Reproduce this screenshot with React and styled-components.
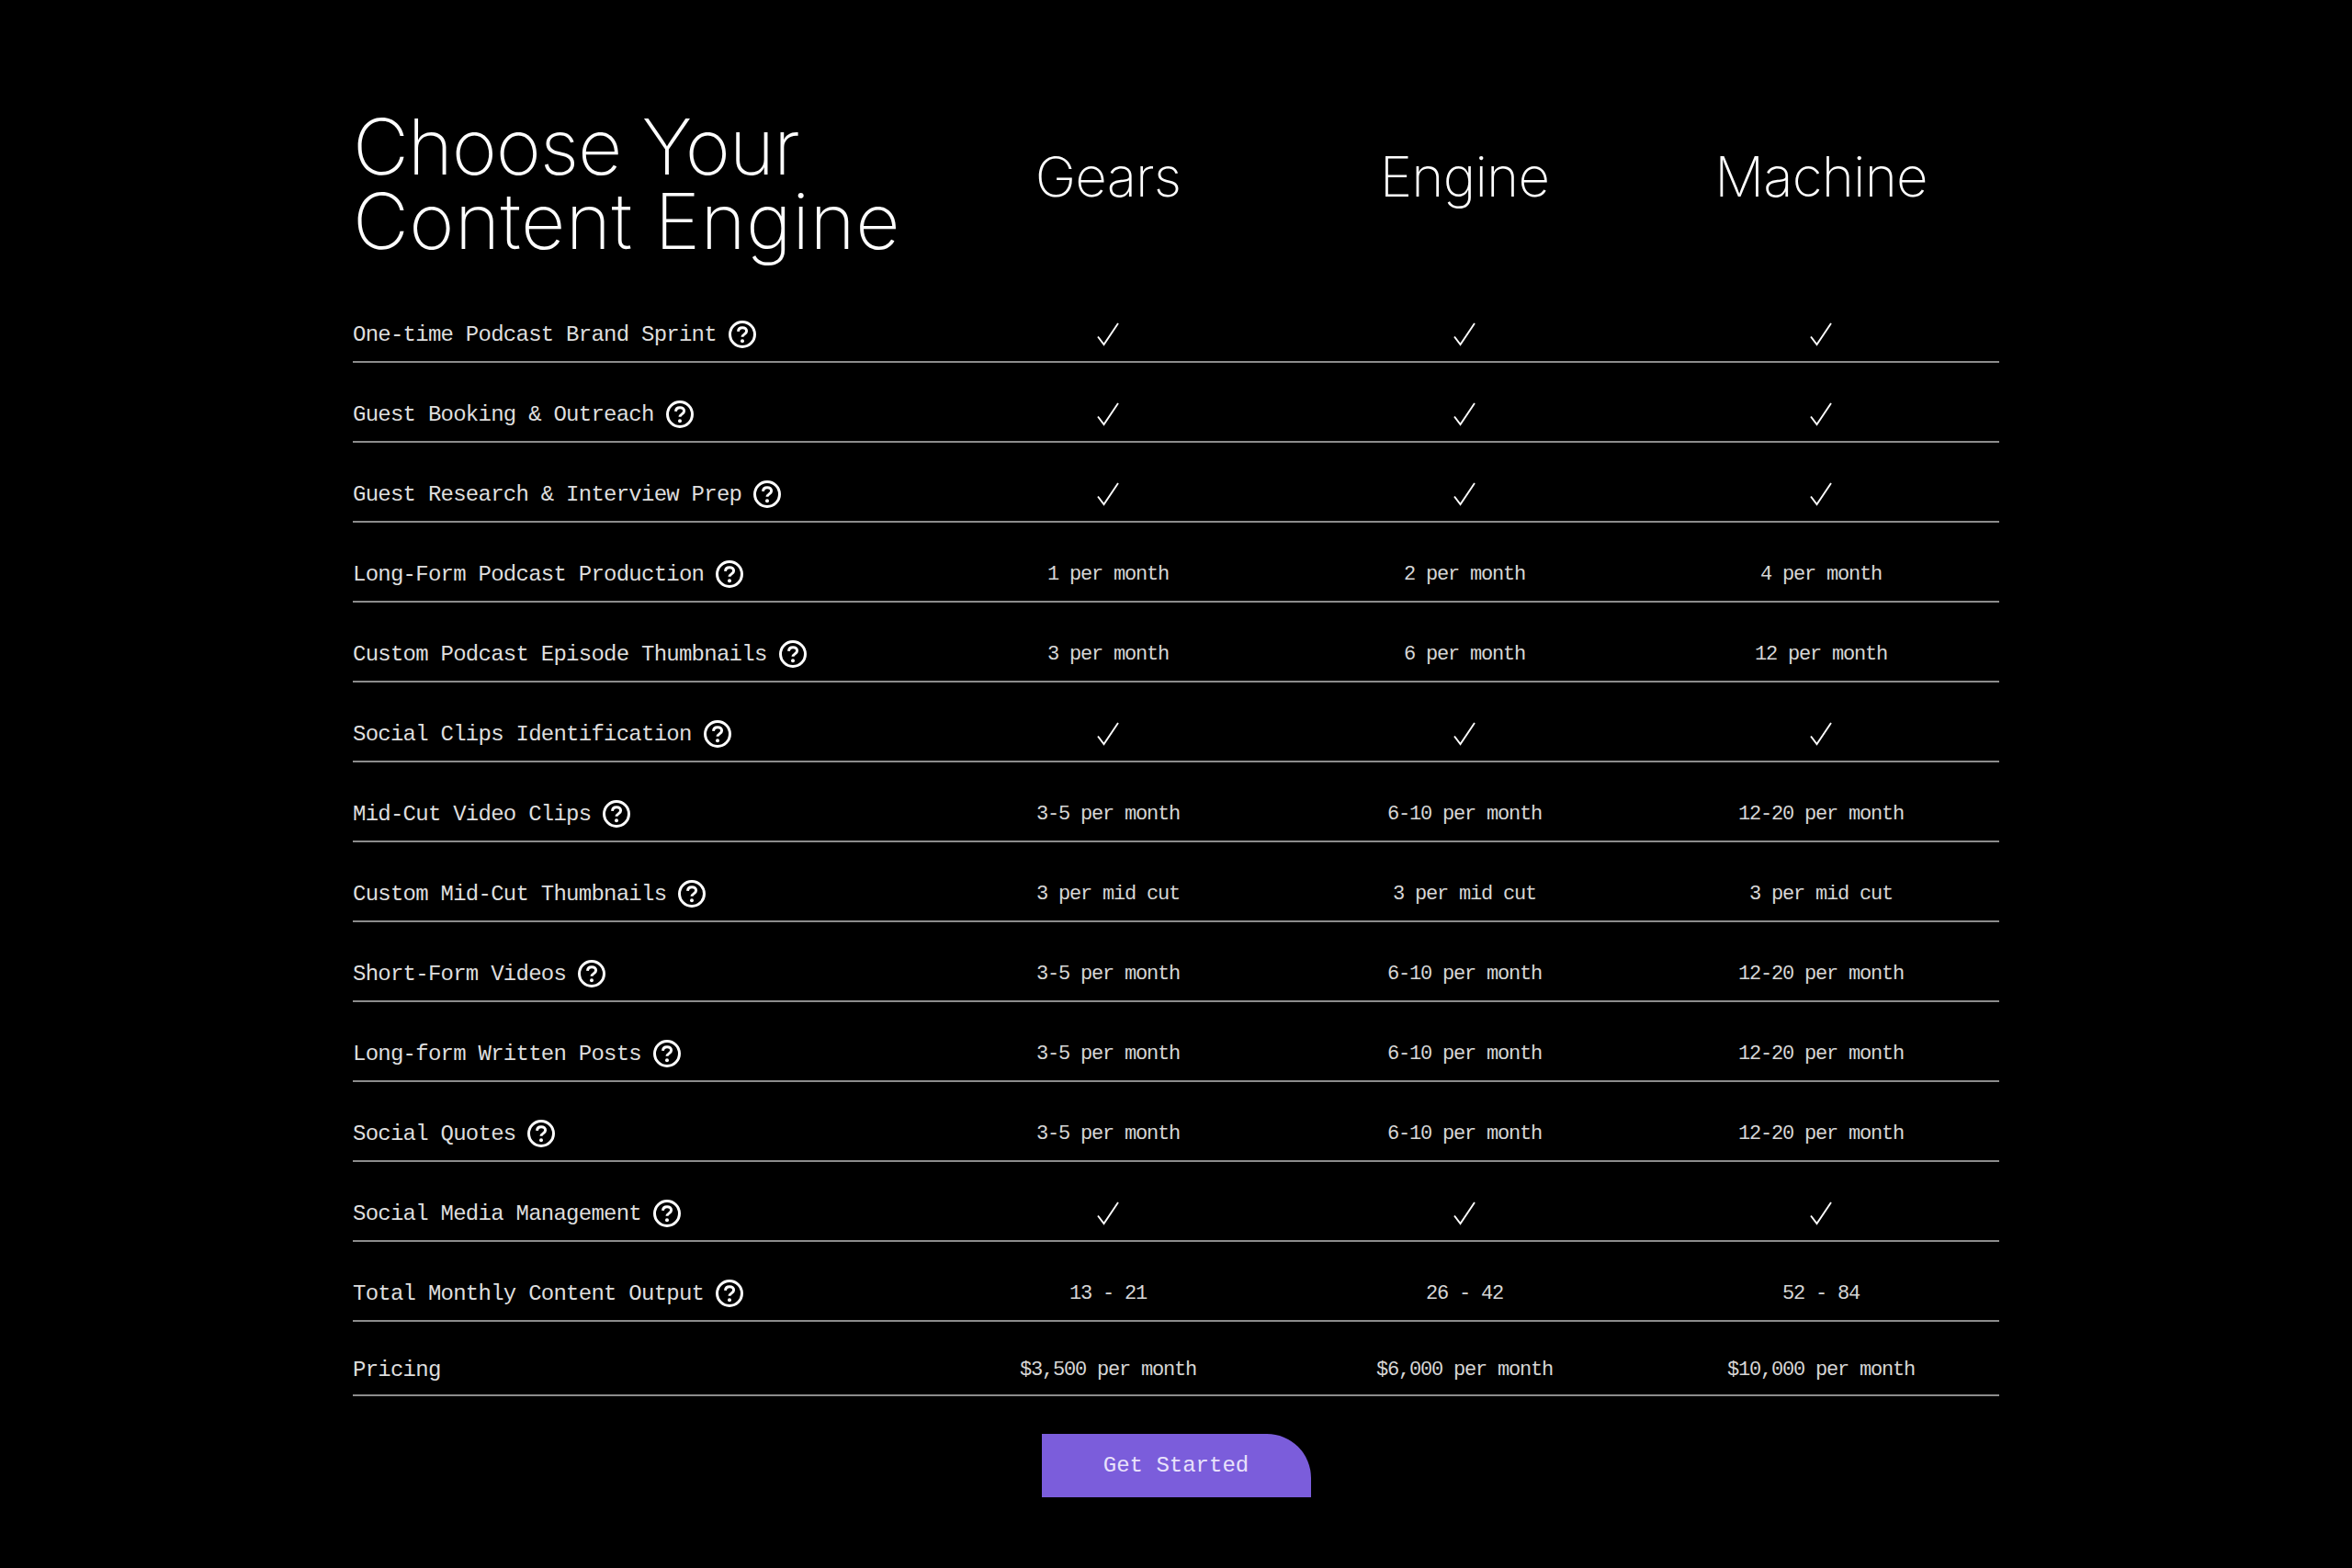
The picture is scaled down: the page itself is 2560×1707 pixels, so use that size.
import React from 'react';
import styled, { createGlobalStyle } from 'styled-components';

const GlobalStyle = createGlobalStyle`
  html, body {
    margin: 0;
    background: #000;
  }
`;

const Page = styled.div`
  min-height: 1707px;
  box-sizing: border-box;
  padding: 119px 384px 0;
  background: #000;
  display: flex;
  flex-direction: column;
`;

const Header = styled.div`
  display: grid;
  grid-template-columns: 628px repeat(3, 388px);
  align-items: start;
  height: 189px;
`;

const Title = styled.h1`
  margin: 0;
  color: #fff;
  font-family: 'Inter', sans-serif;
  font-size: 84px;
  font-weight: 200;
  line-height: 81px;
`;

const TitleLine = styled.span`
  display: block;
  letter-spacing: ${({ $tracking }) => $tracking};
  white-space: nowrap;
`;

const PlanName = styled.h2`
  margin: 37px 0 0;
  color: #fff;
  text-align: center;
  font-family: 'Inter', sans-serif;
  font-size: 60px;
  font-weight: 200;
  line-height: 72px;
  letter-spacing: -0.8px;
`;

const Row = styled.div`
  display: grid;
  grid-template-columns: 628px repeat(3, 388px);
  align-items: end;
  box-sizing: border-box;
  height: ${({ $last }) => ($last ? '81px' : '87px')};
  padding-bottom: ${({ $last }) => ($last ? '12px' : '14px')};
  border-bottom: 2px solid #8c8c8c;
`;

const Label = styled.div`
  display: flex;
  align-items: center;
  gap: 12px;
  height: 30px;
  color: #dedede;
  font-family: 'Liberation Mono', monospace;
  font-size: 24px;
  letter-spacing: -0.75px;
  white-space: nowrap;
`;

const Value = styled.div`
  height: 30px;
  line-height: 32px;
  text-align: center;
  color: #d6d6d6;
  font-family: 'Liberation Mono', monospace;
  font-size: 22px;
  letter-spacing: -1.2px;
  white-space: nowrap;
`;

const CheckCell = styled.div`
  display: flex;
  justify-content: center;
  box-sizing: border-box;
  height: 30px;
  padding-top: 2px;
`;

const Footer = styled.div`
  display: flex;
  justify-content: center;
  padding-top: 41px;
`;

const StartButton = styled.button`
  width: 293px;
  height: 69px;
  padding: 0;
  border: 0;
  border-radius: 0 48px 0 0;
  background: #7b5ddb;
  color: #e9e2fb;
  font-family: 'Liberation Mono', monospace;
  font-size: 24px;
`;

const HelpIcon = () => (
  <svg width="32" height="32" viewBox="0 0 32 32" fill="none" aria-hidden="true">
    <circle cx="16" cy="16" r="13.5" stroke="#fff" strokeWidth="3" />
    <path
      d="M11.5 12.8c.2-2.600 2-4.100 4.600-4.100s4.500 1.500 4.500 3.800c0 3.300-4.600 3.400-4.600 6.300"
      stroke="#fff"
      strokeWidth="3"
    />
    <circle cx="16" cy="23.200" r="2" fill="#fff" />
  </svg>
);

const Check = () => (
  <svg width="26" height="26" viewBox="0 0 26 26" fill="none" aria-hidden="true">
    <path d="M2 15.500 L8.500 24 L24 1" stroke="#fff" strokeWidth="1.900" />
  </svg>
);

const plans = ['Gears', 'Engine', 'Machine'];

const same = (v) => [v, v, v];
const CHECK = 'check';

const rows = [
  { label: 'One-time Podcast Brand Sprint', values: same(CHECK) },
  { label: 'Guest Booking & Outreach', values: same(CHECK) },
  { label: 'Guest Research & Interview Prep', values: same(CHECK) },
  { label: 'Long-Form Podcast Production', values: ['1 per month', '2 per month', '4 per month'] },
  { label: 'Custom Podcast Episode Thumbnails', values: ['3 per month', '6 per month', '12 per month'] },
  { label: 'Social Clips Identification', values: same(CHECK) },
  { label: 'Mid-Cut Video Clips', values: ['3-5 per month', '6-10 per month', '12-20 per month'] },
  { label: 'Custom Mid-Cut Thumbnails', values: same('3 per mid cut') },
  { label: 'Short-Form Videos', values: ['3-5 per month', '6-10 per month', '12-20 per month'] },
  { label: 'Long-form Written Posts', values: ['3-5 per month', '6-10 per month', '12-20 per month'] },
  { label: 'Social Quotes', values: ['3-5 per month', '6-10 per month', '12-20 per month'] },
  { label: 'Social Media Management', values: same(CHECK) },
  { label: 'Total Monthly Content Output', values: ['13 - 21', '26 - 42', '52 - 84'] },
  { label: 'Pricing', values: ['$3,500 per month', '$6,000 per month', '$10,000 per month'], last: true },
];

export default function App() {
  return (
    <Page>
      <GlobalStyle />
      <Header>
        <Title>
          <TitleLine $tracking="-1.2px">Choose Your</TitleLine>
          <TitleLine $tracking="0.4px">Content Engine</TitleLine>
        </Title>
        {plans.map((plan) => (
          <PlanName key={plan}>{plan}</PlanName>
        ))}
      </Header>
      {rows.map((row) => (
        <Row key={row.label} $last={row.last}>
          <Label>
            {row.label}
            {!row.last && <HelpIcon />}
          </Label>
          {row.values.map((value, i) =>
            value === CHECK ? (
              <CheckCell key={i}>
                <Check />
              </CheckCell>
            ) : (
              <Value key={i}>{value}</Value>
            ),
          )}
        </Row>
      ))}
      <Footer>
        <StartButton>Get Started</StartButton>
      </Footer>
    </Page>
  );
}
